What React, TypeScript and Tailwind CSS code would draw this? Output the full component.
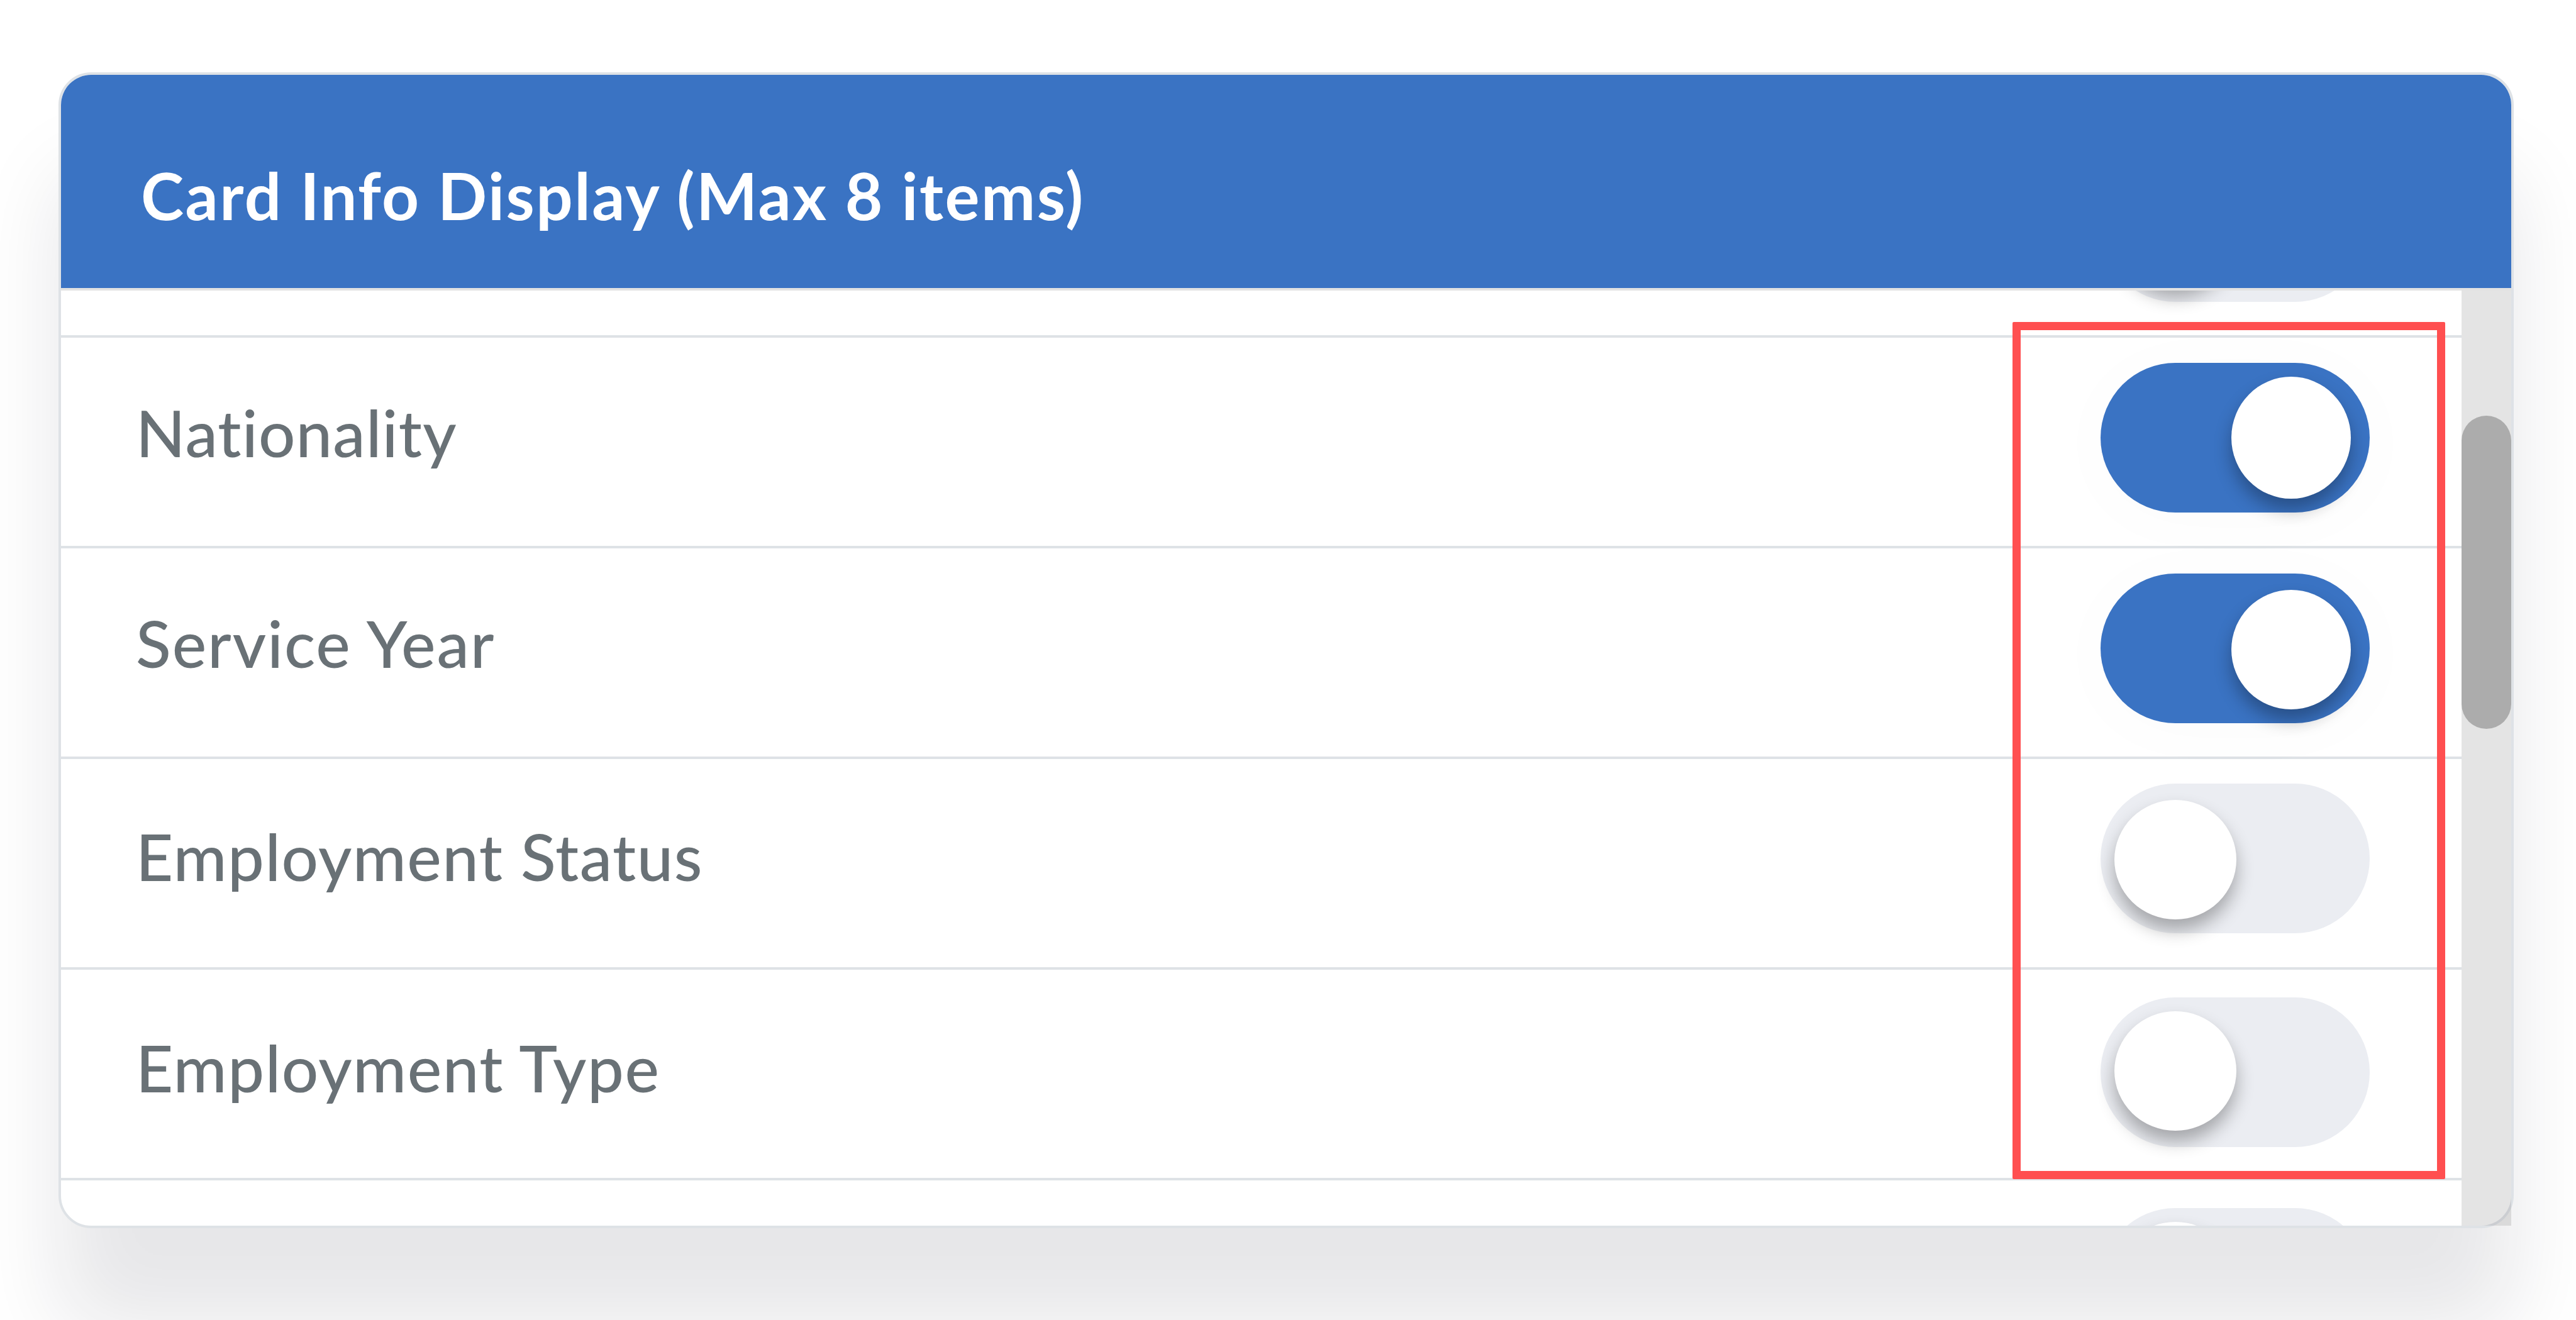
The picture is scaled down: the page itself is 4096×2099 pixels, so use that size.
type InfoItem = {
  label: string;
  enabled: boolean;
  labelClass: string;
  toggleClass: string;
  knobClass: string;
};

const items: InfoItem[] = [
  {
    label: "",
    enabled: false,
    labelClass: "",
    toggleClass: "mt-[40px]",
    knobClass: "mt-[24px] h-[190px]",
  },
  {
    label: "Nationality",
    enabled: true,
    labelClass: "mt-[88px] tracking-[1.1px]",
    toggleClass: "mt-[40px]",
    knobClass: "mt-[22px] h-[194px]",
  },
  {
    label: "Service Year",
    enabled: true,
    labelClass: "mt-[88px] tracking-[1.9px]",
    toggleClass: "mt-[40px]",
    knobClass: "mt-[26px] h-[190px]",
  },
  {
    label: "Employment Status",
    enabled: false,
    labelClass: "mt-[92px] tracking-[1.45px]",
    toggleClass: "mt-[39px]",
    knobClass: "mt-[26px] h-[190px]",
  },
  {
    label: "Employment Type",
    enabled: false,
    labelClass: "mt-[93px] tracking-[1.5px]",
    toggleClass: "mt-[44px]",
    knobClass: "mt-[22px] h-[190px]",
  },
  {
    label: "",
    enabled: false,
    labelClass: "",
    toggleClass: "mt-[44px]",
    knobClass: "mt-[22px] h-[190px]",
  },
];

function Toggle({ item }: { item: InfoItem }) {
  return (
    <div
      className={`flex h-[238px] w-[428px] shrink-0 rounded-full ${item.toggleClass} ${
        item.enabled
          ? "justify-end bg-[#3a73c3] pr-[30px] shadow-[0_9px_120px_rgba(0,0,0,0.02)]"
          : "bg-[#ebedf2] pl-[22px]"
      }`}
    >
      <div
        className={`rounded-[50%] bg-white shadow-[0_17px_28px_rgba(0,0,0,0.3)] ${item.knobClass} ${
          item.enabled ? "w-[190px]" : "w-[194px]"
        }`}
      />
    </div>
  );
}

function InfoRow({ item }: { item: InfoItem }) {
  return (
    <div className="flex h-[335px] shrink-0 items-start justify-between border-b-4 border-[#dee2e6] pr-[146px] pl-[119px]">
      <span
        className={`text-[103px] leading-[124px] font-medium whitespace-nowrap text-[#697176] ${item.labelClass}`}
      >
        {item.label}
      </span>
      <Toggle item={item} />
    </div>
  );
}

function ScrollBar() {
  return (
    <div className="relative w-[79px] shrink-0 bg-[#e4e4e4] pt-[199px]">
      <div className="h-[498px] rounded-full bg-[#acacac]" />
      {/* the square end of the track sticks out of the rounded card */}
      <div className="absolute right-0 bottom-0 size-[48px] overflow-hidden bg-[#dadada]">
        <div className="size-[52px] rounded-br-[52px] border-r-4 border-b-4 border-[#cbcdd1] bg-[#e4e4e4]" />
      </div>
    </div>
  );
}

export default function App() {
  return (
    <main className="relative h-[2099px] w-[4096px] overflow-hidden bg-white pt-[115px] pl-[93px] font-['Lato','Liberation_Sans',sans-serif]">
      <section className="flex h-[1838px] w-[3904px] flex-col rounded-[52px] border-4 border-[#dee2e6] bg-white shadow-[0_160px_136px_rgba(20,22,36,0.103)]">
        <header className="flex h-[343px] shrink-0 items-center rounded-t-[48px] border-b-4 border-[#e2e2e2] bg-[#3a73c3] pt-[43px] pl-[127px]">
          <h1 className="text-[103px] leading-[124px] font-bold tracking-[2.45px] whitespace-nowrap text-white">
            Card Info Display (Max 8 items)
          </h1>
        </header>

        <div className="flex min-h-0 flex-1">
          <div className="flex flex-1 flex-col overflow-hidden rounded-bl-[48px]">
            <div className="-mt-[260px] flex flex-col">
              {items.map((item, index) => (
                <InfoRow key={index} item={item} />
              ))}
            </div>
          </div>
          <ScrollBar />
        </div>
      </section>

      {/* highlight around the toggles */}
      <div className="absolute top-[512px] left-[3200px] h-[1363px] w-[688px] rounded-[2px] border-[13px] border-[#ff4f50]" />
    </main>
  );
}
